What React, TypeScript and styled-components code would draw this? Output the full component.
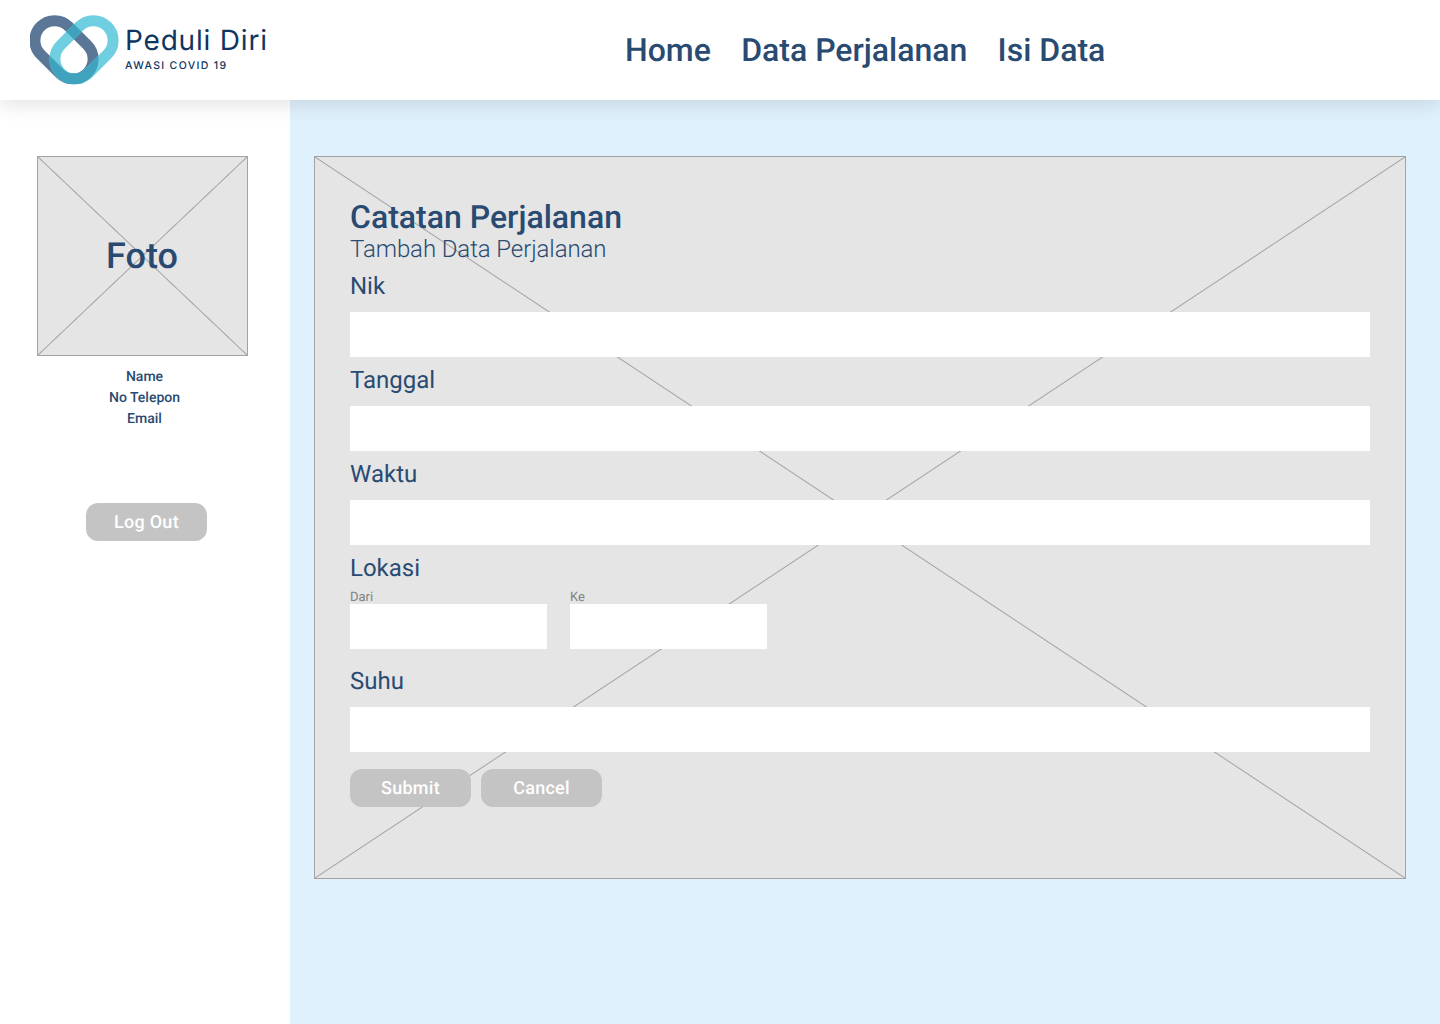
import React from "react";
import styled, { createGlobalStyle } from "styled-components";

const GlobalStyle = createGlobalStyle`
  html, body {
    margin: 0;
    padding: 0;
  }
  body {
    font-family: Roboto, "Liberation Sans", sans-serif;
    text-rendering: geometricPrecision;
    background: #fff;
  }
  * {
    box-sizing: border-box;
  }
`;

const Logo = () => (
  <LogoSvg width="90" height="70" viewBox="30 15 90 70">
    <defs>
      <mask id="overlap" maskUnits="userSpaceOnUse" x="20" y="5" width="110" height="90">
        <rect x="51" y="30" width="66" height="39.5" rx="19.75" fill="none" stroke="#fff" strokeWidth="11" transform="rotate(-45 84 49.75)" />
      </mask>
    </defs>
    <rect x="31" y="30" width="66" height="39.5" rx="19.75" fill="none" stroke="#5b7797" strokeWidth="11" transform="rotate(45 64 49.75)" />
    <rect x="51" y="30" width="66" height="39.5" rx="19.75" fill="none" stroke="#6fcfe0" strokeWidth="11" transform="rotate(-45 84 49.75)" />
    <g mask="url(#overlap)">
      <rect x="31" y="30" width="66" height="39.5" rx="19.75" fill="none" stroke="#40a3bd" strokeWidth="11" transform="rotate(45 64 49.75)" />
    </g>
  </LogoSvg>
);

const FormField = ({ label }: { label: string }) => (
  <Field>
    <FieldLabel>{label}</FieldLabel>
    <TextInput type="text" />
  </Field>
);

function App() {
  return (
    <Page>
      <GlobalStyle />
      <Header>
        <Brand>
          <Logo />
          <BrandText>
            <BrandName>Peduli Diri</BrandName>
            <BrandTag>AWASI COVID 19</BrandTag>
          </BrandText>
        </Brand>
        <Nav>
          <NavLink href="#">Home</NavLink>
          <NavLink href="#">Data Perjalanan</NavLink>
          <NavLink href="#">Isi Data</NavLink>
        </Nav>
      </Header>
      <Body>
        <Sidebar>
          <PhotoBox>Foto</PhotoBox>
          <Profile>
            <span>Name</span>
            <span>No Telepon</span>
            <span>Email</span>
          </Profile>
          <LogOutButton>Log Out</LogOutButton>
        </Sidebar>
        <Main>
          <FormCard>
            <Title>Catatan Perjalanan</Title>
            <Subtitle>Tambah Data Perjalanan</Subtitle>
            <FormField label="Nik" />
            <FormField label="Tanggal" />
            <FormField label="Waktu" />
            <LocationField>
              <FieldLabel>Lokasi</FieldLabel>
              <LocationRow>
                <SmallField>
                  <SmallLabel>Dari</SmallLabel>
                  <SmallInput type="text" />
                </SmallField>
                <SmallField>
                  <SmallLabel>Ke</SmallLabel>
                  <SmallInput type="text" />
                </SmallField>
              </LocationRow>
            </LocationField>
            <FormField label="Suhu" />
            <Actions>
              <ActionButton>Submit</ActionButton>
              <ActionButton>Cancel</ActionButton>
            </Actions>
          </FormCard>
        </Main>
      </Body>
    </Page>
  );
}

export default App;

const Page = styled.div`
  width: 1440px;
  height: 1024px;
  display: flex;
  flex-direction: column;
  overflow: hidden;
`;

const Header = styled.header`
  height: 100px;
  flex-shrink: 0;
  display: flex;
  align-items: center;
  padding-left: 30px;
  background: #fff;
  box-shadow: 0 4px 20px rgba(0, 0, 0, 0.12);
  position: relative;
  z-index: 1;
`;

const Brand = styled.div`
  width: 595px;
  display: flex;
  align-items: center;
  gap: 5px;
`;

const LogoSvg = styled.svg`
  flex-shrink: 0;
`;

const BrandText = styled.div`
  display: flex;
  flex-direction: column;
  margin-bottom: 4px;
  color: #0f3560;
`;

const BrandName = styled.span`
  font-family: Inter, sans-serif;
  font-size: 28px;
  letter-spacing: 0.8px;
  line-height: 32px;
`;

const BrandTag = styled.span`
  font-family: Inter, sans-serif;
  font-size: 10.5px;
  font-weight: 500;
  letter-spacing: 1.35px;
  line-height: 14px;
  margin-top: 3px;
`;

const Nav = styled.nav`
  display: flex;
  gap: 30.25px;
`;

const NavLink = styled.a`
  color: #294b72;
  font-size: 32px;
  font-weight: 500;
  line-height: 38px;
  text-decoration: none;
`;

const Body = styled.div`
  flex: 1;
  display: flex;
`;

const Sidebar = styled.aside`
  width: 290px;
  flex-shrink: 0;
  display: flex;
  flex-direction: column;
  padding: 56px 0 0 37px;
  background: #fff;
`;

const crossed = `
  background-color: #e5e5e5;
  background-image:
    linear-gradient(to top right, transparent calc(50% - 1px), #a3a3a3 50%, transparent calc(50% + 1px)),
    linear-gradient(to bottom right, transparent calc(50% - 1px), #a3a3a3 50%, transparent calc(50% + 1px));
  border: 1px solid #a3a3a3;
`;

const PhotoBox = styled.div`
  ${crossed}
  width: 211px;
  height: 200px;
  display: flex;
  align-items: center;
  justify-content: center;
  padding-right: 1px;
  color: #294b72;
  font-size: 36px;
  font-weight: 500;
`;

const Profile = styled.div`
  width: 215px;
  margin-top: 11px;
  display: flex;
  flex-direction: column;
  align-items: center;
  color: #294b72;
  font-size: 14px;
  font-weight: 500;
  line-height: 21px;
`;

const ActionButton = styled.button`
  width: 121px;
  height: 38px;
  padding: 0;
  border: none;
  border-radius: 12px;
  background: #c4c4c4;
  color: #fff;
  font-family: Roboto, sans-serif;
  font-size: 18px;
  font-weight: 500;
  letter-spacing: 0.25px;
  text-rendering: geometricPrecision;
`;

const LogOutButton = styled(ActionButton)`
  margin: 73px 0 0 49px;
`;

const Main = styled.main`
  flex: 1;
  padding: 56px 34px 0 24px;
  background: #dff1fd;
`;

const FormCard = styled.section`
  ${crossed}
  height: 723px;
  display: flex;
  flex-direction: column;
  padding: 42px 35px 0;
`;

const Title = styled.h1`
  margin: 0;
  color: #294b72;
  font-size: 32px;
  font-weight: 500;
  line-height: 36px;
`;

const Subtitle = styled.p`
  margin: 0 0 9px;
  color: #294b72;
  font-size: 24px;
  font-weight: 300;
  letter-spacing: -0.09px;
  line-height: 28px;
`;

const Field = styled.div`
  display: flex;
  flex-direction: column;
  margin-bottom: 9px;
`;

const FieldLabel = styled.label`
  color: #294b72;
  font-size: 24px;
  line-height: 28px;
  margin-bottom: 12px;
`;

const TextInput = styled.input`
  width: 100%;
  height: 45px;
  border: none;
  background: #fff;
`;

const LocationField = styled.div`
  display: flex;
  flex-direction: column;
  margin-bottom: 18px;

  ${FieldLabel} {
    margin-bottom: 0;
  }
`;

const LocationRow = styled.div`
  display: flex;
  gap: 23px;
`;

const SmallField = styled.div`
  display: flex;
  flex-direction: column;
`;

const SmallLabel = styled.label`
  color: #828282;
  font-size: 13px;
  line-height: 13px;
  margin-top: 9px;
`;

const SmallInput = styled.input`
  width: 197px;
  height: 45px;
  border: none;
  background: #fff;
`;

const Actions = styled.div`
  display: flex;
  gap: 10px;
  margin-top: 8px;
`;
